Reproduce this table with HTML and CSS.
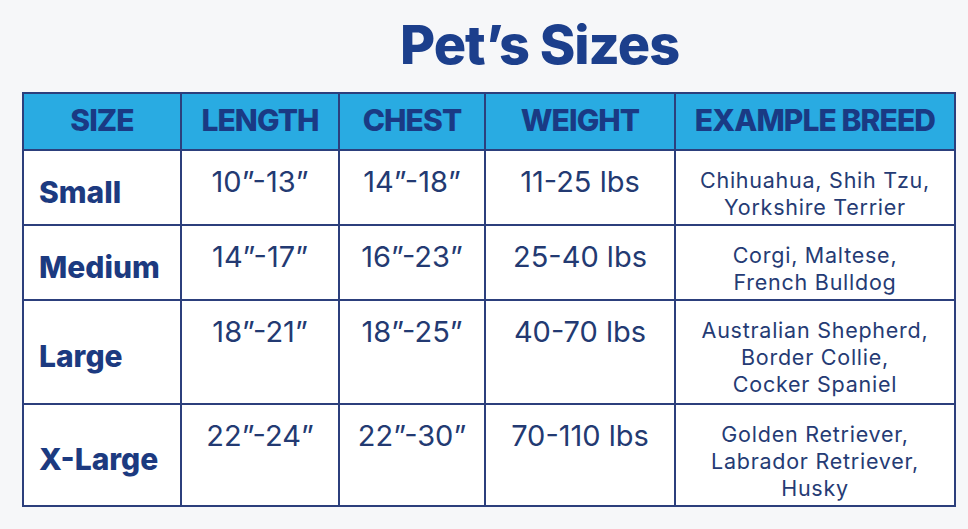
FILE: index.html
```html
<!DOCTYPE html>
<html>
<head>
<meta charset="utf-8">
<link rel="stylesheet" href="styles.css">
</head>
<body>
<div class="page">
  <h1 class="title">Pet’s Sizes</h1>
  <table class="sizes">
    <colgroup>
      <col class="c1"><col class="c2"><col class="c3"><col class="c4"><col class="c5">
    </colgroup>
    <thead>
      <tr class="rh"><th>SIZE</th><th>LENGTH</th><th>CHEST</th><th>WEIGHT</th><th>EXAMPLE BREED</th></tr>
    </thead>
    <tbody>
      <tr class="r1">
        <td class="label">Small</td><td class="num">10”-13”</td><td class="num">14”-18”</td><td class="num">11-25 lbs</td>
        <td class="breed">Chihuahua, Shih Tzu,<br>Yorkshire Terrier</td>
      </tr>
      <tr class="r2">
        <td class="label">Medium</td><td class="num">14”-17”</td><td class="num">16”-23”</td><td class="num">25-40 lbs</td>
        <td class="breed">Corgi, Maltese,<br>French Bulldog</td>
      </tr>
      <tr class="r3">
        <td class="label">Large</td><td class="num">18”-21”</td><td class="num">18”-25”</td><td class="num">40-70 lbs</td>
        <td class="breed">Australian Shepherd,<br>Border Collie,<br>Cocker Spaniel</td>
      </tr>
      <tr class="r4">
        <td class="label">X-Large</td><td class="num">22”-24”</td><td class="num">22”-30”</td><td class="num">70-110 lbs</td>
        <td class="breed">Golden Retriever,<br>Labrador Retriever,<br>Husky</td>
      </tr>
    </tbody>
  </table>
</div>
</body>
</html>
```
FILE: styles.css
```css
html, body {
  margin: 0;
  padding: 0;
  background: #f6f7f9;
}
.page {
  width: 968px;
  height: 529px;
  padding: 12px 0 0 22px;
  box-sizing: border-box;
  overflow: hidden;
}
.title {
  margin: 0 0 14px 0;
  padding-left: 378px;
  font-family: "Inter", "Liberation Sans", sans-serif;
  font-weight: 800;
  font-size: 54px;
  line-height: 66px;
  letter-spacing: -1px;
  color: #1c3f8c;
}
.sizes {
  border-collapse: collapse;
  table-layout: fixed;
  width: 932px;
  background: #ffffff;
}
.c1 { width: 158px; }
.c2 { width: 158px; }
.c3 { width: 146px; }
.c4 { width: 190px; }
.c5 { width: 280px; }
.sizes th, .sizes td {
  border: 2px solid #2c3f7c;
  padding: 0;
  color: #1e3670;
  box-sizing: border-box;
}
.rh { height: 57px; }
.r1, .r2 { height: 75px; }
.r3 { height: 104px; }
.r4 { height: 102px; }
.sizes th {
  background: #29abe2;
  font-family: "Inter", "Liberation Sans", sans-serif;
  font-weight: 800;
  font-size: 30px;
  line-height: 34px;
  letter-spacing: -0.9px;
  color: #1a3a84;
  text-align: center;
  padding-bottom: 3px;
}
.sizes td.label {
  font-family: "Inter", "Liberation Sans", sans-serif;
  font-weight: 800;
  font-size: 30px;
  line-height: 34px;
  padding: 8px 0 0 15px;
  color: #1c3a80;
  vertical-align: middle;
}
.sizes td.num {
  font-family: "Inter", "Liberation Sans", sans-serif;
  font-weight: 400;
  font-size: 29px;
  line-height: 34px;
  text-align: center;
  vertical-align: top;
  padding-top: 14px;
  color: #233a72;
}
.sizes td.breed {
  font-family: "Inter", "Liberation Sans", sans-serif;
  font-weight: 400;
  font-size: 21.5px;
  line-height: 27px;
  letter-spacing: 0.75px;
  text-align: center;
  vertical-align: top;
  padding-top: 16px;
  color: #253b74;
}
```
